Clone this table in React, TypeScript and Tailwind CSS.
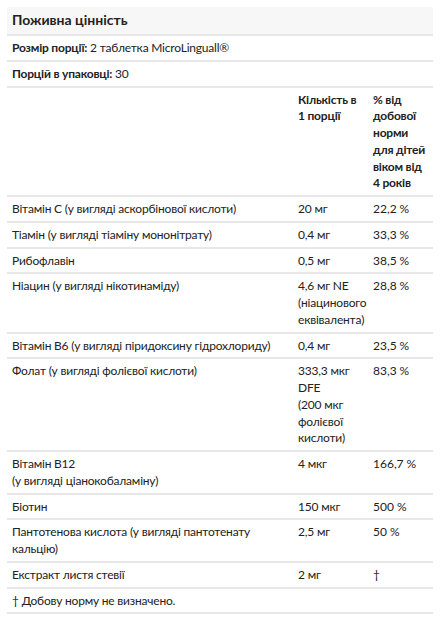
import React from "react";

type Row = { name: React.ReactNode; amount: React.ReactNode; dv: string };

const rows: Row[] = [
  { name: "Вітамін С (у вигляді аскорбінової кислоти)", amount: "20 мг", dv: "22,2\u202f%" },
  { name: "Тіамін (у вигляді тіаміну мононітрату)", amount: "0,4 мг", dv: "33,3\u202f%" },
  { name: "Рибофлавін", amount: "0,5 мг", dv: "38,5\u202f%" },
  {
    name: "Ніацин (у вигляді нікотинаміду)",
    amount: (
      <>
        4,6 мг NE
        <br />
        (ніацинового
        <br />
        еквівалента)
      </>
    ),
    dv: "28,8\u202f%",
  },
  { name: "Вітамін B6 (у вигляді піридоксину гідрохлориду)", amount: "0,4 мг", dv: "23,5\u202f%" },
  {
    name: "Фолат (у вигляді фолієвої кислоти)",
    amount: (
      <>
        333,3 мкг
        <br />
        DFE
        <br />
        (200 мкг
        <br />
        фолієвої
        <br />
        кислоти)
      </>
    ),
    dv: "83,3\u202f%",
  },
  {
    name: (
      <>
        Вітамін B12
        <br />
        (у вигляді ціанокобаламіну)
      </>
    ),
    amount: "4 мкг",
    dv: "166,7\u202f%",
  },
  { name: "Біотин", amount: "150 мкг", dv: "500\u202f%" },
  {
    name: (
      <>
        Пантотенова кислота (у вигляді пантотенату
        <br />
        кальцію)
      </>
    ),
    amount: "2,5 мг",
    dv: "50\u202f%",
  },
  { name: "Екстракт листя стевії", amount: "2 мг", dv: "†" },
];

const rowCls = "grid grid-cols-[287px_75px_64px] border-b-2 border-[#e8e8e8]";
const c1 = "pl-[5px] pr-[4px] pt-[4px] pb-[3px]";
const c2 = "pl-[4px] pr-[2px] pt-[4px] pb-[3px] whitespace-nowrap";

export default function App() {
  return (
    <div
      className="bg-white min-h-[630px] pt-[7px] pl-[7px] text-[#222] text-[12px] leading-[16.75px] tracking-[-0.2px]"
      style={{ fontFamily: "Lato, 'Noto Sans', sans-serif" }}
    >
      <div className="w-[426px]">
        <div className="bg-[#f7f7f7] border-b-2 border-[#e8e8e8] h-[29px] flex items-center px-[5px]">
          <h2 className="font-bold text-[14px] tracking-[0px]">Поживна цінність</h2>
        </div>
        <div className={`border-b-2 border-[#e8e8e8] ${c1}`}>
          <span className="font-bold">Розмір порції:</span> 2 таблетка MicroLinguall®
        </div>
        <div className={`border-b-2 border-[#e8e8e8] ${c1}`}>
          <span className="font-bold">Порцій в упаковці:</span> 30
        </div>
        <div className={rowCls}>
          <div className={c1}></div>
          <div className={`${c2} font-bold`}>
            Кількість в
            <br />1 порції
          </div>
          <div className={`${c2} font-bold`}>
            % від
            <br />
            добової
            <br />
            норми
            <br />
            для дітей
            <br />
            віком від
            <br />4 років
          </div>
        </div>
        {rows.map((r, i) => (
          <div key={i} className={rowCls}>
            <div className={c1}>{r.name}</div>
            <div className={c2}>{r.amount}</div>
            <div className={c2}>{r.dv}</div>
          </div>
        ))}
        <div className={`border-b-2 border-[#e8e8e8] ${c1}`}>† Добову норму не визначено.</div>
      </div>
    </div>
  );
}
